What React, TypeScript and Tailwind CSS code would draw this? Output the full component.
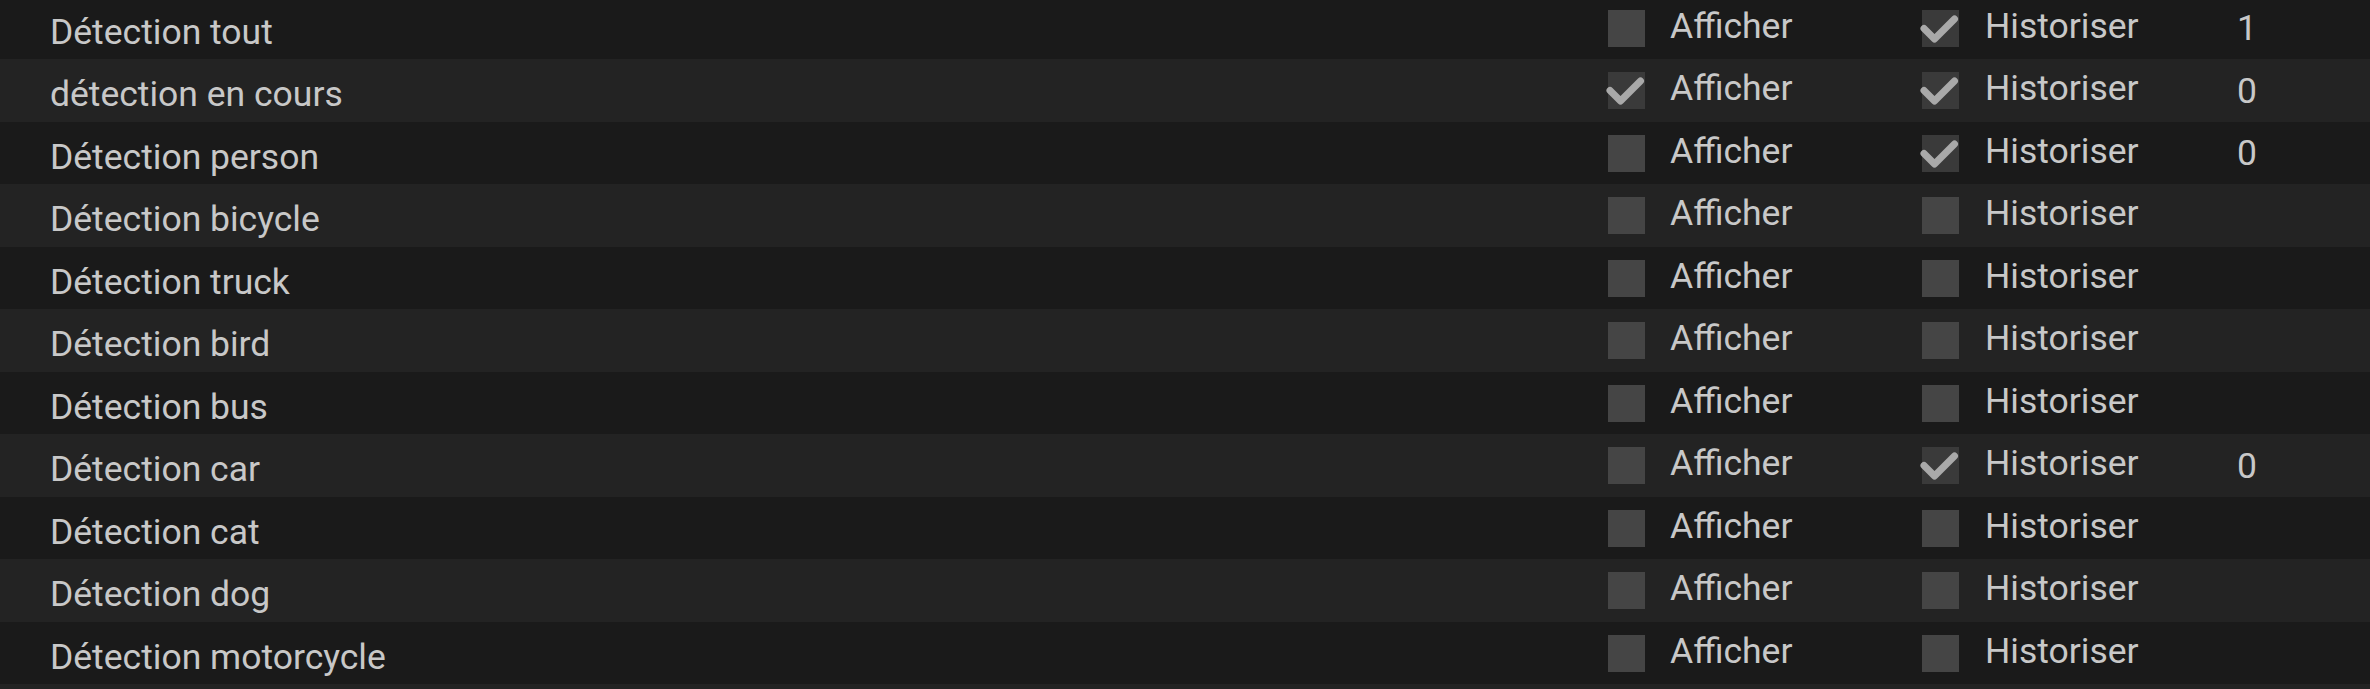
import { useState } from 'react'

type Row = { label: string; show: boolean; log: boolean; count?: number }

const initialRows: Row[] = [
  { label: 'Détection tout', show: false, log: true, count: 1 },
  { label: 'détection en cours', show: true, log: true, count: 0 },
  { label: 'Détection person', show: false, log: true, count: 0 },
  { label: 'Détection bicycle', show: false, log: false },
  { label: 'Détection truck', show: false, log: false },
  { label: 'Détection bird', show: false, log: false },
  { label: 'Détection bus', show: false, log: false },
  { label: 'Détection car', show: false, log: true, count: 0 },
  { label: 'Détection cat', show: false, log: false },
  { label: 'Détection dog', show: false, log: false },
  { label: 'Détection motorcycle', show: false, log: false },
]

function Check({ checked, onClick }: { checked: boolean; onClick: () => void }) {
  return (
    <button
      onClick={onClick}
      className={`relative mt-[13px] h-[37px] w-[37px] shrink-0 ${checked ? 'bg-[#3a3a3a]' : 'bg-[#454545]'}`}
    >
      {checked && (
        <svg className="absolute left-0 top-0 overflow-visible" width="37" height="37" viewBox="0 0 37 37">
          <polyline
            points="2,18.5 12.5,29 32.5,9"
            fill="none"
            stroke="#a9a9a9"
            strokeWidth="7"
            strokeLinecap="round"
            strokeLinejoin="round"
          />
        </svg>
      )}
    </button>
  )
}

export default function App() {
  const [rows, setRows] = useState(initialRows)

  const toggle = (i: number, key: 'show' | 'log') =>
    setRows(rs => rs.map((r, j) => (j === i ? { ...r, [key]: !r[key] } : r)))

  return (
    <div className="h-[689px] w-full overflow-hidden bg-[#1a1a1a] font-['Roboto',sans-serif] text-[35.5px] leading-none text-[#c8c8c8]">
      <div className="-mt-[3.5px]">
        {rows.map((r, i) => (
          <div
            key={r.label}
            className={`grid h-[62.5px] grid-cols-[1608px_314px_315px_1fr] ${i % 2 ? 'bg-[#232323]' : 'bg-[#1a1a1a]'}`}
          >
            <div className="pl-[50px] pt-[18px]">{r.label}</div>
            <div className="flex gap-[25px]">
              <Check checked={r.show} onClick={() => toggle(i, 'show')} />
              <span className="pt-[12px]">Afficher</span>
            </div>
            <div className="flex gap-[26px]">
              <Check checked={r.log} onClick={() => toggle(i, 'log')} />
              <span className="pt-[12px]">Historiser</span>
            </div>
            <div className="pt-[14.5px]">{r.count ?? ''}</div>
          </div>
        ))}
        <div className="h-[62.5px] bg-[#232323]" />
      </div>
    </div>
  )
}
